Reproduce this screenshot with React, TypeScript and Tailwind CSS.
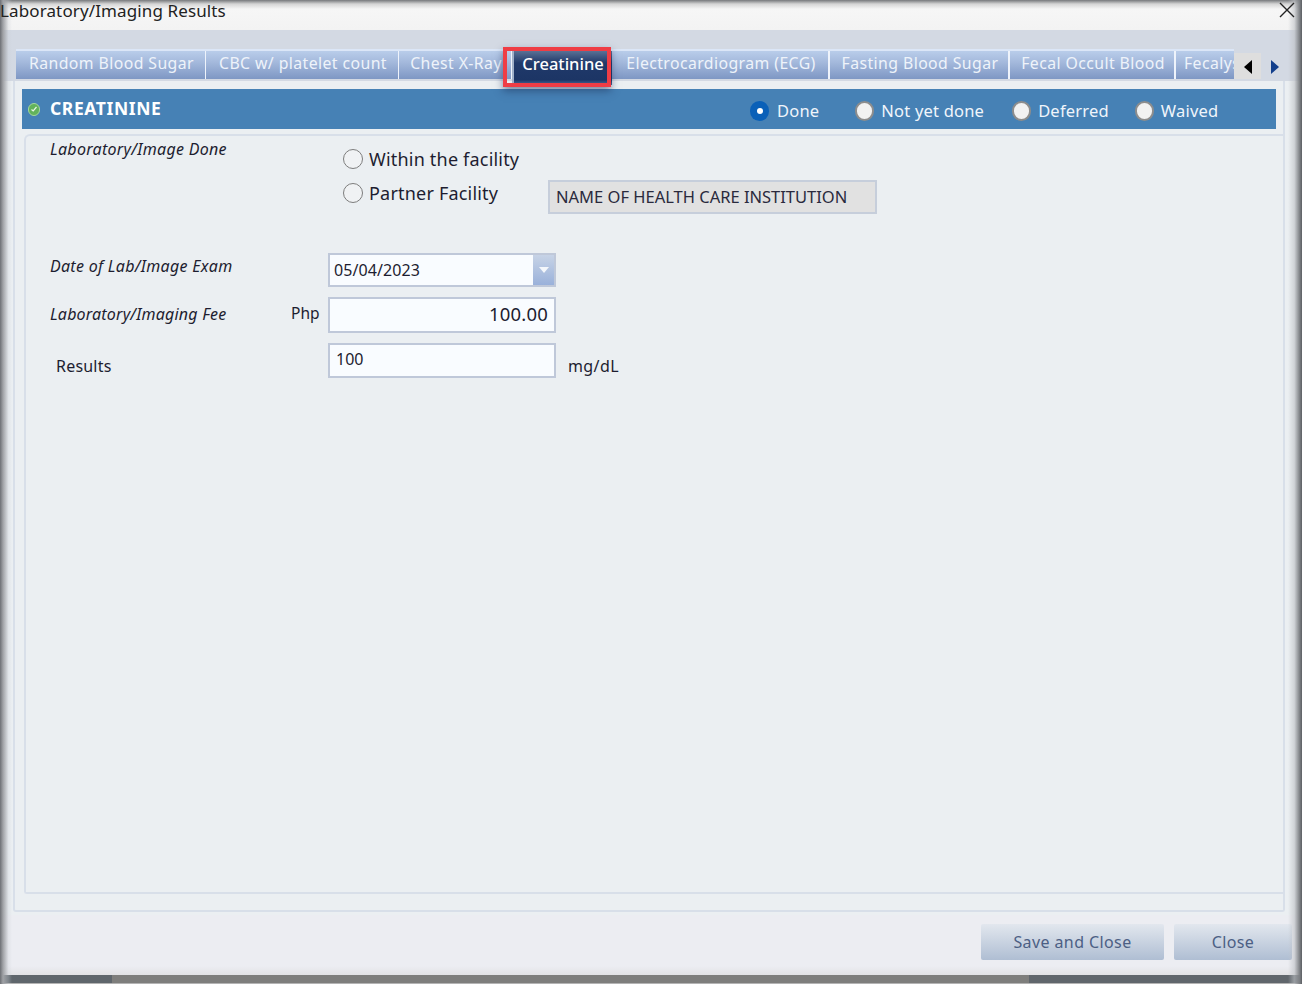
import React from "react";

const font = { fontFamily: '"Noto Sans", "Open Sans", sans-serif' };

const tabs = [
  { label: "Random Blood Sugar", w: "w-[190px]", b: "border-r" },
  { label: "CBC w/ platelet count", w: "w-[193px]", b: "border-r" },
  { label: "Chest X-Ray", w: "w-[113px]", b: "border-r" },
];
const tabsRight = [
  { label: "Electrocardiogram (ECG)", w: "w-[218px]", b: "border-r-2" },
  { label: "Fasting Blood Sugar", w: "w-[180px]", b: "border-r-2" },
  { label: "Fecal Occult Blood", w: "w-[166px]", b: "border-r-2" },
];

function Tab({ label, w, b }: { label: string; w: string; b: string }) {
  return (
    <div className={`${w} ${b} h-[28px] shrink-0 border-[#eef3fb] flex items-center justify-center pl-[2px] pb-[2px] text-[15.8px] tracking-[0.42px] text-[#eef3fa] whitespace-nowrap`}>
      {label}
    </div>
  );
}

function Radio({ checked }: { checked?: boolean }) {
  return checked ? (
    <span className="w-[19px] h-[20px] rounded-full bg-[#0a60b8] flex items-center justify-center shrink-0">
      <span className="w-[6px] h-[6px] rounded-full bg-white" />
    </span>
  ) : (
    <span className="w-[19px] h-[20px] rounded-full bg-[#f2f2f2] border-2 border-[#8d8d8d] shrink-0" />
  );
}

function HeaderOption({ label, checked, ml, gap }: { label: string; checked?: boolean; ml: string; gap: string }) {
  return (
    <div className={`flex items-center mt-[4px] ${ml} ${gap}`}>
      <Radio checked={checked} />
      <span className="text-[16.5px] tracking-[0.2px] text-[#f0f5fb]">{label}</span>
    </div>
  );
}

function FormRadio({ label }: { label: string }) {
  return (
    <div className="flex items-center gap-[6px] h-[24px]">
      <span className="w-[20px] h-[20px] rounded-full border-[1.5px] border-[#7d7d7d] bg-[#f0f2f4] shrink-0" />
      <span className="text-[18px] tracking-[0.2px] text-[#1d1d30] whitespace-nowrap">{label}</span>
    </div>
  );
}

export default function App() {
  return (
    <div style={font} className="relative w-[1302px] h-[984px] overflow-hidden flex flex-col bg-[#d3d9e3]">
      {/* Title bar */}
      <div className="h-[30px] shrink-0 flex items-center justify-between pr-[6px] bg-[linear-gradient(180deg,#77797c_0px,#d5d5d5_4px,#f6f6f6_9px,#f3f3f3_100%)]">
        <span className="relative z-10 text-[17px] tracking-[0.12px] text-[#222] leading-none -mt-[10px]">Laboratory/Imaging Results</span>
        <svg width="18" height="18" viewBox="0 0 18 18" className="relative z-10 -mt-[10px]" fill="none" stroke="#222" strokeWidth="1.4">
          <path d="M2 2 L16 16 M16 2 L2 16" />
        </svg>
      </div>

      {/* Tab strip */}
      <div className="h-[51px] shrink-0 pt-[19px] pl-[16px] flex items-start">
        <div className="relative flex h-[30px] w-[1218px] overflow-visible border-t-2 border-[#dbe6f7] bg-[linear-gradient(180deg,#b9cdea_0%,#a4b9dc_40%,#7e97c4_100%)]">
          {tabs.map((t) => (
            <Tab key={t.label} {...t} />
          ))}
          <div className="relative w-[100px] h-[34px] shrink-0 flex items-center justify-center pb-[7px] text-[16.5px] font-medium text-white bg-[linear-gradient(180deg,#5a7195_0%,#20396a_35%,#1c3565_85%,#4a6a9a_100%)] border-l-2 border-[#9fb0c9] z-10">
            Creatinine
          </div>
          {tabsRight.map((t) => (
            <Tab key={t.label} {...t} />
          ))}
          <div className="flex-1 overflow-hidden h-[28px] pl-[8px] pb-[2px] flex items-center text-[15.8px] tracking-[0.42px] text-[#eef3fa]">
            Fecalysis
          </div>
          <div className="absolute left-[487px] -top-[4px] w-[108px] h-[40px] border-[4px] border-[#ef3d45] shadow-[0_4px_8px_rgba(30,50,90,0.55)] z-20" />
        </div>
        <div className="w-[27px] h-[26px] mt-[4px] pt-[1px] bg-[#dedede] flex items-center justify-center">
          <svg width="10" height="14" viewBox="0 0 10 14"><path d="M9 0 V14 L1 7 Z" fill="#000" /></svg>
        </div>
        <div className="w-[26px] h-[26px] mt-[4px] pt-[2px] flex items-center justify-center pl-[1px]">
          <svg width="10" height="14" viewBox="0 0 10 14"><path d="M1 0 V14 L9 7 Z" fill="#123f8c" /></svg>
        </div>
      </div>

      {/* Main panel */}
      <div className="h-[834px] shrink-0 bg-[#ebeff2] pl-[13px] pr-[17px]">
        <div className="h-[831px] border-2 border-t-0 border-[#d8dfe9] rounded-b-[3px] px-[7px] pt-[8px] pr-0">
          {/* Blue header */}
          <div className="h-[40px] w-[1254px] bg-[#4681b5] flex items-center pl-[6px]">
            <span className="w-[12px] h-[13px] rounded-full bg-[#62b25b] border border-[#a4d79d] flex items-center justify-center shrink-0">
              <svg width="8" height="8" viewBox="0 0 8 8" fill="none" stroke="#e9f6e6" strokeWidth="1.2"><path d="M1.5 4.5 L3.2 6 L6.5 2" /></svg>
            </span>
            <span className="ml-[10px] w-[111px] -mt-[1px] text-[17.5px] font-bold tracking-[0.6px] text-white whitespace-nowrap">CREATININE</span>
            <HeaderOption label="Done" checked ml="ml-[589px]" gap="gap-[8px]" />
            <HeaderOption label="Not yet done" ml="ml-[36px]" gap="gap-[7px]" />
            <HeaderOption label="Deferred" ml="ml-[28px]" gap="gap-[7px]" />
            <HeaderOption label="Waived" ml="ml-[26px]" gap="gap-[7px]" />
          </div>

          {/* Fieldset */}
          <div className="mt-[5px] ml-[2px] mr-0 h-[760px] border-2 border-r-0 border-[#d8dfe9] rounded-tl-[6px] rounded-bl-[3px] text-[#1d1d30]">
            <div className="flex pl-[24px] h-[117px]">
              <div className="w-[293px] pt-[3px] text-[16px] italic leading-[20px] tracking-[0.3px] whitespace-nowrap">Laboratory/Image Done</div>
              <div className="pt-[11px] flex flex-col gap-[10px]">
                <FormRadio label="Within the facility" />
                <div className="flex items-start">
                  <div className="w-[205px]">
                    <FormRadio label="Partner Facility" />
                  </div>
                  <div className="w-[329px] h-[34px] mt-[-1px] bg-[#e1e1e1] border-2 border-[#c6cedb] flex items-center pl-[6px] text-[16.5px] text-[#2a2a3d] whitespace-nowrap">
                    NAME OF HEALTH CARE INSTITUTION
                  </div>
                </div>
              </div>
            </div>

            <div className="flex items-center pl-[24px] h-[34px]">
              <div className="w-[278px] -mt-[8px] text-[16px] italic tracking-[0.3px] whitespace-nowrap">Date of Lab/Image Exam</div>
              <div className="w-[228px] h-[34px] bg-[#f9fcff] border-2 border-[#bfc8d9] flex items-center">
                <span className="flex-1 pl-[4px] text-[16px] tracking-[0.1px]">05/04/2023</span>
                <div className="w-[21px] h-full bg-[linear-gradient(180deg,#c7d3e6_0%,#9ab1da_100%)] flex items-center justify-center">
                  <svg width="10" height="6" viewBox="0 0 10 6"><path d="M0 0 H10 L5 6 Z" fill="#f4f7fb" /></svg>
                </div>
              </div>
            </div>

            <div className="flex items-center pl-[24px] h-[36px] mt-[10px]">
              <div className="w-[241px] -mt-[2px] text-[16px] italic tracking-[0.2px] whitespace-nowrap">Laboratory/Imaging Fee</div>
              <div className="w-[37px] -mt-[2px] text-[15.5px]">Php</div>
              <div className="w-[228px] h-[36px] bg-[#f9fcff] border-2 border-[#bfc8d9] flex items-center justify-end pr-[6px] pb-[2px] text-[18.5px] tracking-[0.2px]">100.00</div>
            </div>

            <div className="flex pl-[30px] h-[35px] mt-[10px]">
              <div className="w-[272px] pt-[11px] text-[16px] tracking-[0.2px]">Results</div>
              <div className="w-[228px] h-[35px] bg-[#f9fcff] border-2 border-[#bfc8d9] flex items-center pl-[6px] pb-[3px] text-[16px]">100</div>
              <div className="ml-[12px] pt-[11px] text-[16px] tracking-[0.4px]">mg/dL</div>
            </div>
          </div>
        </div>
      </div>

      {/* Footer */}
      <div className="flex-1 bg-[#ecedf2] flex flex-col">
        <div className="h-[60px] shrink-0 flex items-start justify-end pt-[9px] pr-[10px] gap-[10px] bg-[linear-gradient(180deg,#ecedf2_85%,#e2e2e5_100%)]">
          <button className="w-[183px] h-[36px] rounded-[2px] bg-[linear-gradient(180deg,#e2e7ee_0%,#afbed3_100%)] text-[16px] tracking-[0.4px] text-[#4c5f84]">Save and Close</button>
          <button className="w-[118px] h-[36px] rounded-[2px] bg-[linear-gradient(180deg,#e2e7ee_0%,#afbed3_100%)] text-[16px] tracking-[0.4px] text-[#4c5f84]">Close</button>
        </div>
        <div className="flex h-[8px]">
          <div className="w-[112px] bg-[#5f666c]" />
          <div className="w-[917px] bg-[#7e7e7c]" />
          <div className="flex-1 bg-[#60666c]" />
        </div>
        <div className="h-[1px] bg-[#b4b4b4]" />
      </div>

      {/* Window edge shading */}
      <div className="absolute left-0 top-0 bottom-0 w-[12px] bg-[linear-gradient(90deg,#6d7075_0%,#a0a2a6_25%,rgba(200,205,212,0.3)_70%,rgba(255,255,255,0)_100%)] pointer-events-none" />
      <div className="absolute right-0 top-0 bottom-0 w-[14px] bg-[linear-gradient(90deg,rgba(255,255,255,0)_0%,rgba(190,193,197,0.6)_45%,#7b7e82_85%,#5c5f63_100%)] pointer-events-none" />
    </div>
  );
}
